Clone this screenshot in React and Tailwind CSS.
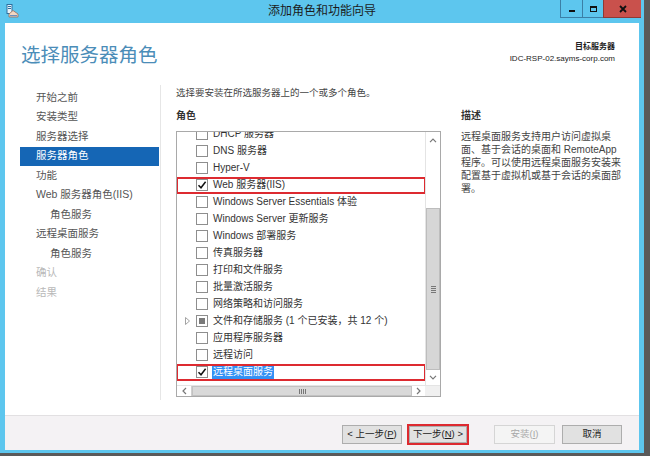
import React from "react";

const roles = [
  { t: "DHCP 服务器" },
  { t: "DNS 服务器" },
  { t: "Hyper-V" },
  { t: "Web 服务器(IIS)", checked: true, red: true },
  { t: "Windows Server Essentials 体验" },
  { t: "Windows Server 更新服务" },
  { t: "Windows 部署服务" },
  { t: "传真服务器" },
  { t: "打印和文件服务" },
  { t: "批量激活服务" },
  { t: "网络策略和访问服务" },
  { t: "文件和存储服务 (1 个已安装，共 12 个)", partial: true, expander: true },
  { t: "应用程序服务器" },
  { t: "远程访问" },
  { t: "远程桌面服务", checked: true, red: true, selected: true },
];

const nav = [
  { t: "开始之前" },
  { t: "安装类型" },
  { t: "服务器选择" },
  { t: "服务器角色", active: true },
  { t: "功能" },
  { t: "Web 服务器角色(IIS)" },
  { t: "角色服务", indent: true },
  { t: "远程桌面服务" },
  { t: "角色服务", indent: true },
  { t: "确认", dim: true },
  { t: "结果", dim: true },
];

function Checkbox({ checked, partial }) {
  return (
    <div className="w-[12px] h-[12px] border border-[#8e8e8e] bg-white flex items-center justify-center shrink-0">
      {checked && (
        <svg width="10" height="10" viewBox="0 0 10 10">
          <path d="M1.5 5.2 L4 7.8 L8.6 1.8" fill="none" stroke="#111" strokeWidth="1.5" />
        </svg>
      )}
      {partial && <div className="w-[6px] h-[6px] bg-[#7a7a7a]" />}
    </div>
  );
}

function Btn({ children, w, disabled }) {
  return (
    <div
      className={
        "h-[19px] flex items-center justify-center text-[9.5px] border " +
        w +
        (disabled
          ? " bg-[#f4f4f4] border-[#d5d5d5] text-[#a8a8a8]"
          : " bg-[#e1e1e1] border-[#adadad] text-[#1a1a1a]")
      }
    >
      {children}
    </div>
  );
}

export default function App() {
  return (
    <div className="w-[650px] h-[456px] bg-[#5a5a5a] font-['Liberation_Sans','Noto_Sans_CJK_SC',sans-serif] text-[#333] overflow-hidden">
      <div className="w-[644px] h-[453px] bg-[#5dc6ee] flex flex-col">
        {/* title bar */}
        <div className="h-[23px] grid grid-cols-[1fr_auto_1fr] items-start shrink-0">
          <div className="pl-[6px] pt-[4px]">
            <svg width="13" height="14" viewBox="0 0 13 14">
              <rect x="1" y="0.5" width="5" height="9" fill="#e9f4fb" stroke="#2f6f9e" strokeWidth="1" />
              <rect x="2" y="2" width="3" height="1" fill="#2f6f9e" />
              <rect x="2" y="4" width="3" height="1" fill="#2f6f9e" />
              <path d="M3 10 L7 6.5 L12 10 L12 13 L3 13 Z" fill="#f2d7c2" stroke="#9a6f58" strokeWidth="0.8" />
              <rect x="4" y="11" width="7" height="1.2" fill="#6a8fc0" />
            </svg>
          </div>
          <div className="pt-[4px] text-[12px] leading-[15px] text-[#1b1b1b] text-center whitespace-nowrap">
            添加角色和功能向导
          </div>
          <div className="flex justify-end pr-[3px]">
            <div className="w-[22px] h-[18px] border-l border-b border-[#3b7fa6] flex items-end justify-center pb-[5px]">
              <div className="w-[6px] h-[2px] bg-[#111]" />
            </div>
            <div className="w-[21px] h-[18px] border-l border-b border-[#3b7fa6] flex items-center justify-center">
              <div className="w-[7px] h-[6px] border border-[#111] border-t-2" />
            </div>
            <div className="w-[38px] h-[18px] bg-[#c9514c] border-l border-b border-[#8e3a36] flex items-center justify-center">
              <svg width="8" height="8" viewBox="0 0 8 8">
                <path d="M1 1 L7 7 M7 1 L1 7" stroke="#111" strokeWidth="1.8" />
              </svg>
            </div>
          </div>
        </div>

        {/* inner panel */}
        <div className="mx-[5px] flex flex-col flex-1">
          <div className="h-[392px] bg-white flex flex-col">
            {/* header */}
            <div className="h-[57px] flex justify-between shrink-0">
              <div className="pl-[16px] pt-[20px] text-[19.5px] leading-[24px] text-[#4b8db8] whitespace-nowrap">
                选择服务器角色
              </div>
              <div className="pr-[24px] pt-[18px] flex flex-col items-end">
                <div className="text-[8px] leading-[11px] font-bold text-[#222]">目标服务器</div>
                <div className="text-[8px] leading-[12px] mt-[1px] text-[#222] whitespace-nowrap">
                  IDC-RSP-02.sayms-corp.com
                </div>
              </div>
            </div>

            {/* main */}
            <div className="flex flex-1">
              {/* nav */}
              <div className="w-[155px] pl-[15px] pt-[8px] flex flex-col">
                {nav.map((n, i) => (
                  <div
                    key={i}
                    className={
                      "w-[139px] h-[19.5px] flex items-center text-[10.5px] whitespace-nowrap " +
                      (n.indent ? "pl-[30px] " : "pl-[16px] ") +
                      (n.active
                        ? "bg-[#1566b5] text-white"
                        : n.dim
                        ? "text-[#b9b9b9]"
                        : "text-[#555]")
                    }
                  >
                    {n.t}
                  </div>
                ))}
              </div>
              <div className="w-px bg-[#e6e6e6] mt-[5px] mb-[15px]" />

              {/* content */}
              <div className="pl-[15px] pt-[6px] flex flex-col">
                <div className="text-[9.5px] leading-[14px] text-[#444] whitespace-nowrap">
                  选择要安装在所选服务器上的一个或多个角色。
                </div>
                <div className="flex mt-[9px]">
                  <div className="flex flex-col">
                    <div className="text-[10px] leading-[14px] font-bold text-[#333]">角色</div>
                    {/* list box */}
                    <div className="mt-[8px] w-[265px] h-[266px] border border-[#a9a9a9] flex flex-col">
                      <div className="flex h-[253px]">
                        <div className="flex-1 overflow-hidden">
                          <div className="-mt-[6.5px] flex flex-col">
                            {roles.map((r, i) => (
                              <div key={i} className="relative h-[17px] flex items-center shrink-0">
                                <div className="w-[19px] flex justify-center pl-[1px]">
                                  {r.expander && (
                                    <svg width="5" height="8" viewBox="0 0 5 8">
                                      <path d="M0.5 0.5 L4.5 4 L0.5 7.5 Z" fill="none" stroke="#9a9a9a" strokeWidth="0.9" />
                                    </svg>
                                  )}
                                </div>
                                <Checkbox checked={r.checked} partial={r.partial} />
                                <div
                                  className={
                                    "ml-[4px] text-[10px] leading-[14px] whitespace-nowrap px-[1px] " +
                                    (r.selected ? "bg-[#3391f5] text-white" : "text-[#333]")
                                  }
                                >
                                  {r.t}
                                </div>
                                {r.red && (
                                  <div className="absolute -left-px -right-px top-0 bottom-0 border-2 border-[#dd2a30]" />
                                )}
                              </div>
                            ))}
                          </div>
                        </div>
                        {/* vertical scrollbar */}
                        <div className="w-[15px] flex flex-col border-l border-[#e4e4e4]">
                          <div className="h-[16px] flex items-center justify-center">
                            <svg width="8" height="5" viewBox="0 0 8 5">
                              <path d="M1 4.2 L4 1.2 L7 4.2" fill="none" stroke="#777" strokeWidth="1.2" />
                            </svg>
                          </div>
                          <div className="h-[60px] bg-white" />
                          <div className="h-[162px] bg-[#d6d6d6] border border-[#bdbdbd] flex items-center justify-center">
                            <div className="flex flex-col gap-[1px]">
                              <div className="w-[5px] h-px bg-[#777]" />
                              <div className="w-[5px] h-px bg-[#777]" />
                              <div className="w-[5px] h-px bg-[#777]" />
                              <div className="w-[5px] h-px bg-[#777]" />
                            </div>
                          </div>
                          <div className="flex-1 flex items-center justify-center">
                            <svg width="8" height="5" viewBox="0 0 8 5">
                              <path d="M1 0.8 L4 3.8 L7 0.8" fill="none" stroke="#777" strokeWidth="1.2" />
                            </svg>
                          </div>
                        </div>
                      </div>
                      {/* horizontal scrollbar */}
                      <div className="flex flex-1 border-t border-[#e4e4e4]">
                        <div className="w-[15px] flex items-center justify-center bg-white border-r border-[#d0d0d0]">
                          <svg width="5" height="8" viewBox="0 0 5 8">
                            <path d="M4 1 L1 4 L4 7" fill="none" stroke="#777" strokeWidth="1.2" />
                          </svg>
                        </div>
                        <div className="w-[220px] bg-[#d9d9d9] border border-[#c2c2c2] flex items-center justify-center">
                          <div className="flex gap-[1px]">
                            <div className="w-px h-[5px] bg-[#777]" />
                            <div className="w-px h-[5px] bg-[#777]" />
                            <div className="w-px h-[5px] bg-[#777]" />
                            <div className="w-px h-[5px] bg-[#777]" />
                          </div>
                        </div>
                        <div className="w-[13px] flex items-center justify-center bg-white">
                          <svg width="5" height="8" viewBox="0 0 5 8">
                            <path d="M1 1 L4 4 L1 7" fill="none" stroke="#777" strokeWidth="1.2" />
                          </svg>
                        </div>
                        <div className="flex-1 bg-[#f0f0f0]" />
                      </div>
                    </div>
                  </div>

                  {/* description */}
                  <div className="ml-[20px] flex flex-col">
                    <div className="text-[10px] leading-[14px] font-bold text-[#333]">描述</div>
                    <div className="mt-[7px] text-[10px] leading-[13px] text-[#444] whitespace-nowrap">
                      远程桌面服务支持用户访问虚拟桌
                      <br />
                      面、基于会话的桌面和 RemoteApp
                      <br />
                      程序。可以使用远程桌面服务安装来
                      <br />
                      配置基于虚拟机或基于会话的桌面部
                      <br />
                      署。
                    </div>
                  </div>
                </div>
              </div>
            </div>
          </div>

          {/* footer */}
          <div className="flex-1 bg-[#f4f2f4] border-t border-[#e2e0e2] flex justify-end items-start pt-[9px] pr-[17px]">
            <Btn w="w-[60px]">&lt; 上一步(<span className="underline">P</span>)</Btn>
            <div className="ml-[5px] w-[62px] h-[21px] -mt-px border-2 border-[#dd2a30] flex">
              <div className="flex-1 bg-[#e1e1e1] border border-[#adadad] flex items-center justify-center text-[9.5px] text-[#1a1a1a]">
                下一步(<span className="underline">N</span>) &gt;
              </div>
            </div>
            <div className="ml-[25px]">
              <Btn w="w-[61px]" disabled>
                安装(<span className="underline">I</span>)
              </Btn>
            </div>
            <div className="ml-[7px]">
              <Btn w="w-[60px]">取消</Btn>
            </div>
          </div>
        </div>
        <div className="h-[3px] shrink-0" />
      </div>
    </div>
  );
}
